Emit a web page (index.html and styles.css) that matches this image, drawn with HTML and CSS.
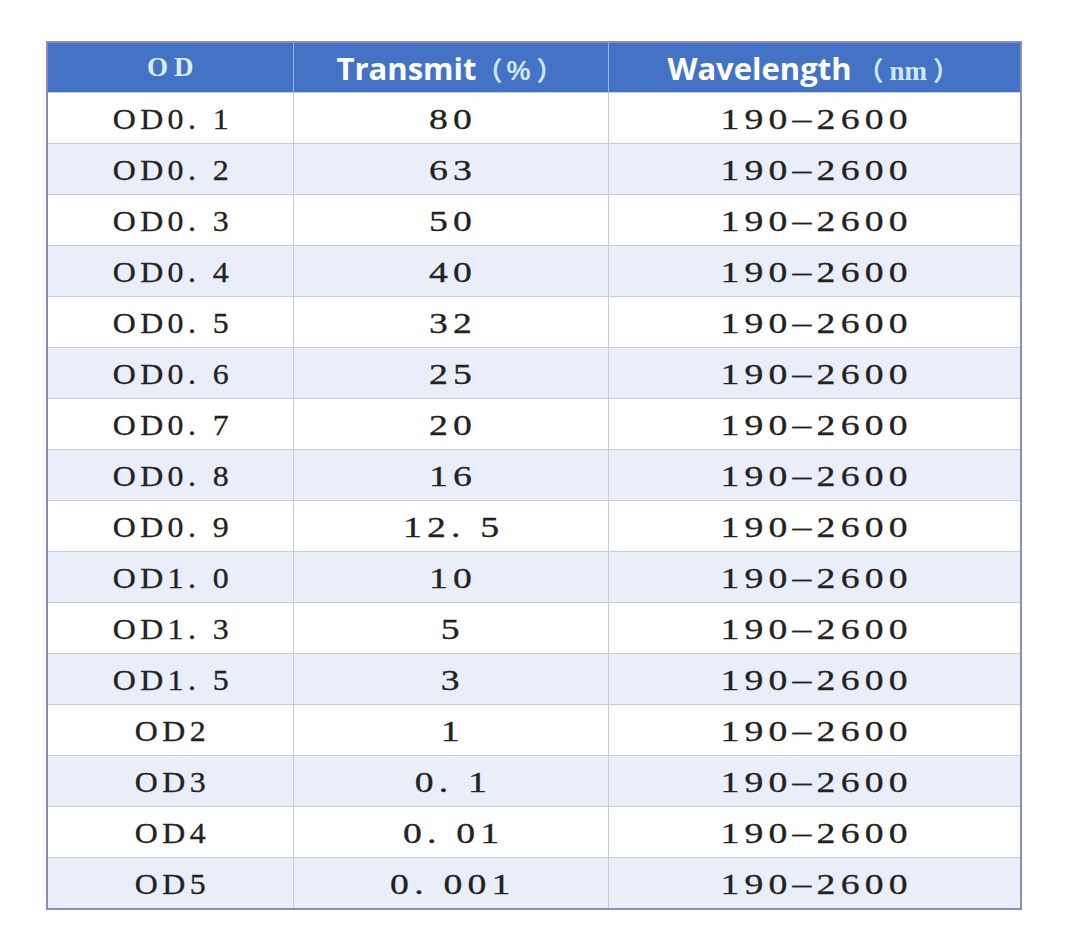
FILE: index.html
```html
<!DOCTYPE html>
<html>
<head>
<meta charset="utf-8">
<link rel="stylesheet" href="styles.css">
</head>
<body>
<div class="page">
<table class="od-table">
<colgroup><col class="c1"><col class="c2"><col class="c3"></colgroup>
<thead>
<tr>
<th><span class="h-od">OD</span></th>
<th><span class="h-sans">Transmit</span><span class="h-cjk">（<b class="h-pct">%</b>）</span></th>
<th><span class="h-sans">Wavelength</span><span class="h-cjk h-gap">（<b class="h-nm">nm</b>）</span></th>
</tr>
</thead>
<tbody>
<tr><td><span class="od">OD0. 1</span></td><td><span class="num">80</span></td><td><span class="num">190–2600</span></td></tr>
<tr><td><span class="od">OD0. 2</span></td><td><span class="num">63</span></td><td><span class="num">190–2600</span></td></tr>
<tr><td><span class="od">OD0. 3</span></td><td><span class="num">50</span></td><td><span class="num">190–2600</span></td></tr>
<tr><td><span class="od">OD0. 4</span></td><td><span class="num">40</span></td><td><span class="num">190–2600</span></td></tr>
<tr><td><span class="od">OD0. 5</span></td><td><span class="num">32</span></td><td><span class="num">190–2600</span></td></tr>
<tr><td><span class="od">OD0. 6</span></td><td><span class="num">25</span></td><td><span class="num">190–2600</span></td></tr>
<tr><td><span class="od">OD0. 7</span></td><td><span class="num">20</span></td><td><span class="num">190–2600</span></td></tr>
<tr><td><span class="od">OD0. 8</span></td><td><span class="num">16</span></td><td><span class="num">190–2600</span></td></tr>
<tr><td><span class="od">OD0. 9</span></td><td><span class="num">12. 5</span></td><td><span class="num">190–2600</span></td></tr>
<tr><td><span class="od">OD1. 0</span></td><td><span class="num">10</span></td><td><span class="num">190–2600</span></td></tr>
<tr><td><span class="od">OD1. 3</span></td><td><span class="num">5</span></td><td><span class="num">190–2600</span></td></tr>
<tr><td><span class="od">OD1. 5</span></td><td><span class="num">3</span></td><td><span class="num">190–2600</span></td></tr>
<tr><td><span class="od">OD2</span></td><td><span class="num">1</span></td><td><span class="num">190–2600</span></td></tr>
<tr><td><span class="od">OD3</span></td><td><span class="num">0. 1</span></td><td><span class="num">190–2600</span></td></tr>
<tr><td><span class="od">OD4</span></td><td><span class="num">0. 01</span></td><td><span class="num">190–2600</span></td></tr>
<tr><td><span class="od">OD5</span></td><td><span class="num">0. 001</span></td><td><span class="num">190–2600</span></td></tr>
</tbody>
</table>
</div>
</body>
</html>
```
FILE: styles.css
```css
html, body {
  margin: 0;
  padding: 0;
  background: #ffffff;
}
.page {
  padding: 41px 0 0 46px;
}
.od-table {
  border-collapse: collapse;
  table-layout: fixed;
  width: 974px;
  border: 2px solid #8a8cbc;
}
.c1 { width: 246px; }
.c2 { width: 315px; }
.c3 { width: 413px; }
.od-table th {
  height: 49px;
  padding: 0;
  background: #4473c5;
  color: #ffffff;
  text-align: center;
  vertical-align: middle;
  border-left: 1px solid #9db4e0;
  white-space: nowrap;
}
.od-table th:first-child { border-left: none; }
.h-od {
  font-family: "Liberation Serif", serif;
  font-weight: bold;
  font-size: 27px;
  letter-spacing: 6px;
  padding-left: 6px;
  color: #d8efff;
}
.h-sans {
  font-family: "Open Sans", "Liberation Sans", sans-serif;
  font-weight: bold;
  font-size: 31px;
  color: #ffffff;
}
.h-cjk {
  font-family: "Noto Sans CJK SC", sans-serif;
  font-weight: bold;
  font-size: 26px;
  letter-spacing: 2px;
  color: #cfe8ff;
}
.h-gap {
  margin-left: 6px;
}
.h-pct {
  font-family: "Liberation Sans", sans-serif;
  font-weight: bold;
  font-size: 27px;
  letter-spacing: 0;
  margin: 0 6px 0 2px;
}
.h-nm {
  font-family: "Liberation Serif", serif;
  font-weight: bold;
  font-size: 27px;
  letter-spacing: 0;
  margin: 0 6px 0 4px;
}
.od-table td {
  height: 51px;
  padding: 3px 0 0 0;
  box-sizing: border-box;
  text-align: center;
  vertical-align: middle;
  font-family: "Liberation Serif", serif;
  font-size: 29px;
  color: #222222;
  -webkit-text-stroke: 0.3px #222222;
  border-left: 1px solid #c9ccd6;
  border-top: 1px solid #c9ccd6;
  white-space: nowrap;
}
.od-table td:first-child { border-left: none; }
.od-table tbody tr:nth-child(odd) td { background: #ffffff; }
.od-table tbody tr:nth-child(even) td { background: #e9eef8; }
.od {
  display: inline-block;
  letter-spacing: 4px;
  padding-left: 4px;
  transform: scaleX(1.1);
}
.num {
  display: inline-block;
  letter-spacing: 4px;
  padding-left: 4px;
  transform: scaleX(1.3);
}
```
